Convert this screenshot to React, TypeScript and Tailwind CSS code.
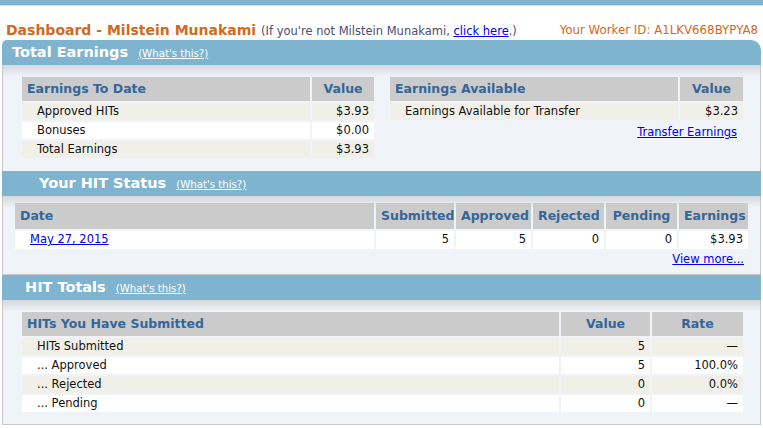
const font = { fontFamily: '"DejaVu Sans", Verdana, sans-serif' };

const SectionHeader = ({ title, indent, rounded }: { title: string; indent: string; rounded?: boolean }) => (
  <div
    className={`h-[25px] bg-[#7fb4d0] flex items-center ${indent} ${rounded ? 'rounded-tl-[5px] rounded-tr-[10px]' : ''}`}
  >
    <span className="text-white font-bold text-[14.5px]">{title}</span>
    <a className="ml-[10px] text-white underline text-[10.2px] mt-[2px]">(What's this?)</a>
  </div>
);

const Th = ({ children, className = '' }: { children: React.ReactNode; className?: string }) => (
  <th className={`bg-[#cbcbcb] text-[#336699] font-bold text-[12.5px] px-[5px] ${className}`}>{children}</th>
);

const Td = ({ children, className = '', bg }: { children: React.ReactNode; className?: string; bg: string }) => (
  <td className={`${bg} h-[17px] px-[5px] text-[11.5px] text-[#111] leading-none ${className}`}>{children}</td>
);

const Body = ({ children, className = '' }: { children: React.ReactNode; className?: string }) => (
  <div
    className={`border-x border-[#c8c8c8] bg-[#f0f4f8] ${className}`}
    style={{ backgroundImage: 'linear-gradient(#d4d8db, #f0f4f8 12px)' }}
  >
    {children}
  </div>
);

const tableCls = 'table-fixed border-separate border-spacing-[2px] -mx-[2px] -mt-[2px]';

export default function App() {
  const totals = [
    ['HITs Submitted', '5', '—', 'bg-[#f0f0e8]'],
    ['... Approved', '5', '100.0%', 'bg-white'],
    ['... Rejected', '0', '0.0%', 'bg-[#f0f0e8]'],
    ['... Pending', '0', '—', 'bg-white'],
  ];

  return (
    <div className="w-[763px] h-[428px] bg-white overflow-hidden" style={font}>
      <div className="h-[6px] bg-[#7fb4d0] border-b border-[#e4dcbc]" />

      <div className="flex items-end justify-between px-[6px] h-[34px] pb-[3px] leading-none">
        <div className="flex items-baseline">
          <span className="text-[#d2691e] font-bold text-[14px]">Dashboard - Milstein Munakami</span>
          <span className="ml-[5px] text-[#4d4d70] text-[11.5px]">
            (If you're not Milstein Munakami, <a className="text-[#0000ee] underline">click here</a>.)
          </span>
        </div>
        <span className="text-[#d2691e] text-[11.8px] mr-[-1px]">Your Worker ID: A1LKV668BYPYA8</span>
      </div>

      <div className="mx-[2px]">
        {/* Total Earnings */}
        <SectionHeader title="Total Earnings" indent="pl-[10px]" rounded />
        <Body className="h-[106px] pt-[12px] flex gap-[16px] pl-[19px]">
          <div className="w-[352px]">
            <table className={`w-[356px] ${tableCls}`}>
              <thead>
                <tr className="h-[24px]">
                  <Th className="text-left">Earnings To Date</Th>
                  <Th className="w-[62px] text-center">Value</Th>
                </tr>
              </thead>
              <tbody>
                <tr>
                  <Td bg="bg-[#f0f0e8]" className="pl-[15px]">Approved HITs</Td>
                  <Td bg="bg-[#f0f0e8]" className="text-right">$3.93</Td>
                </tr>
                <tr>
                  <Td bg="bg-white" className="pl-[15px]">Bonuses</Td>
                  <Td bg="bg-white" className="text-right">$0.00</Td>
                </tr>
                <tr>
                  <Td bg="bg-[#f0f0e8]" className="pl-[15px]">Total Earnings</Td>
                  <Td bg="bg-[#f0f0e8]" className="text-right">$3.93</Td>
                </tr>
              </tbody>
            </table>
          </div>
          <div className="w-[353px]">
            <table className={`w-[357px] ${tableCls}`}>
              <thead>
                <tr className="h-[24px]">
                  <Th className="text-left">Earnings Available</Th>
                  <Th className="w-[63px] text-center">Value</Th>
                </tr>
              </thead>
              <tbody>
                <tr>
                  <Td bg="bg-[#f0f0e8]" className="pl-[15px]">Earnings Available for Transfer</Td>
                  <Td bg="bg-[#f0f0e8]" className="text-right">$3.23</Td>
                </tr>
              </tbody>
            </table>
            <div className="text-right text-[11.5px] pr-[6px] mt-[5px] leading-none">
              <a className="text-[#0000ee] underline">Transfer Earnings</a>
            </div>
          </div>
        </Body>

        {/* Your HIT Status */}
        <SectionHeader title="Your HIT Status" indent="pl-[37px]" />
        <Body className="h-[79px] pt-[7px] pl-[12px] border-b">
          <table className={`w-[737px] ${tableCls}`}>
            <thead>
              <tr className="h-[26px]">
                <Th className="text-left">Date</Th>
                <Th className="w-[78px] text-center">Submitted</Th>
                <Th className="w-[75px] text-center">Approved</Th>
                <Th className="w-[71px] text-center">Rejected</Th>
                <Th className="w-[71px] text-center">Pending</Th>
                <Th className="w-[69px] text-center">Earnings</Th>
              </tr>
            </thead>
            <tbody>
              <tr className="h-[18px]">
                <Td bg="bg-white" className="pl-[15px]">
                  <a className="text-[#0000ee] underline">May 27, 2015</a>
                </Td>
                <Td bg="bg-white" className="text-right">5</Td>
                <Td bg="bg-white" className="text-right">5</Td>
                <Td bg="bg-white" className="text-right">0</Td>
                <Td bg="bg-white" className="text-right">0</Td>
                <Td bg="bg-white" className="text-right">$3.93</Td>
              </tr>
            </tbody>
          </table>
          <div className="w-[733px] text-right text-[11.5px] pr-[4px] mt-[3px] leading-none">
            <a className="text-[#0000ee] underline">View more...</a>
          </div>
        </Body>

        {/* HIT Totals */}
        <SectionHeader title="HIT Totals" indent="pl-[23px]" />
        <Body className="h-[125px] pt-[12px] pl-[19px] border-b">
          <table className={`w-[725px] ${tableCls}`}>
            <thead>
              <tr className="h-[24px]">
                <Th className="text-left">HITs You Have Submitted</Th>
                <Th className="w-[89px] text-center">Value</Th>
                <Th className="w-[91px] text-center">Rate</Th>
              </tr>
            </thead>
            <tbody>
              {totals.map(([label, value, rate, bg]) => (
                <tr key={label}>
                  <Td bg={bg} className="pl-[15px]">{label}</Td>
                  <Td bg={bg} className="text-right">{value}</Td>
                  <Td bg={bg} className="text-right">{rate}</Td>
                </tr>
              ))}
            </tbody>
          </table>
        </Body>
      </div>
    </div>
  );
}
